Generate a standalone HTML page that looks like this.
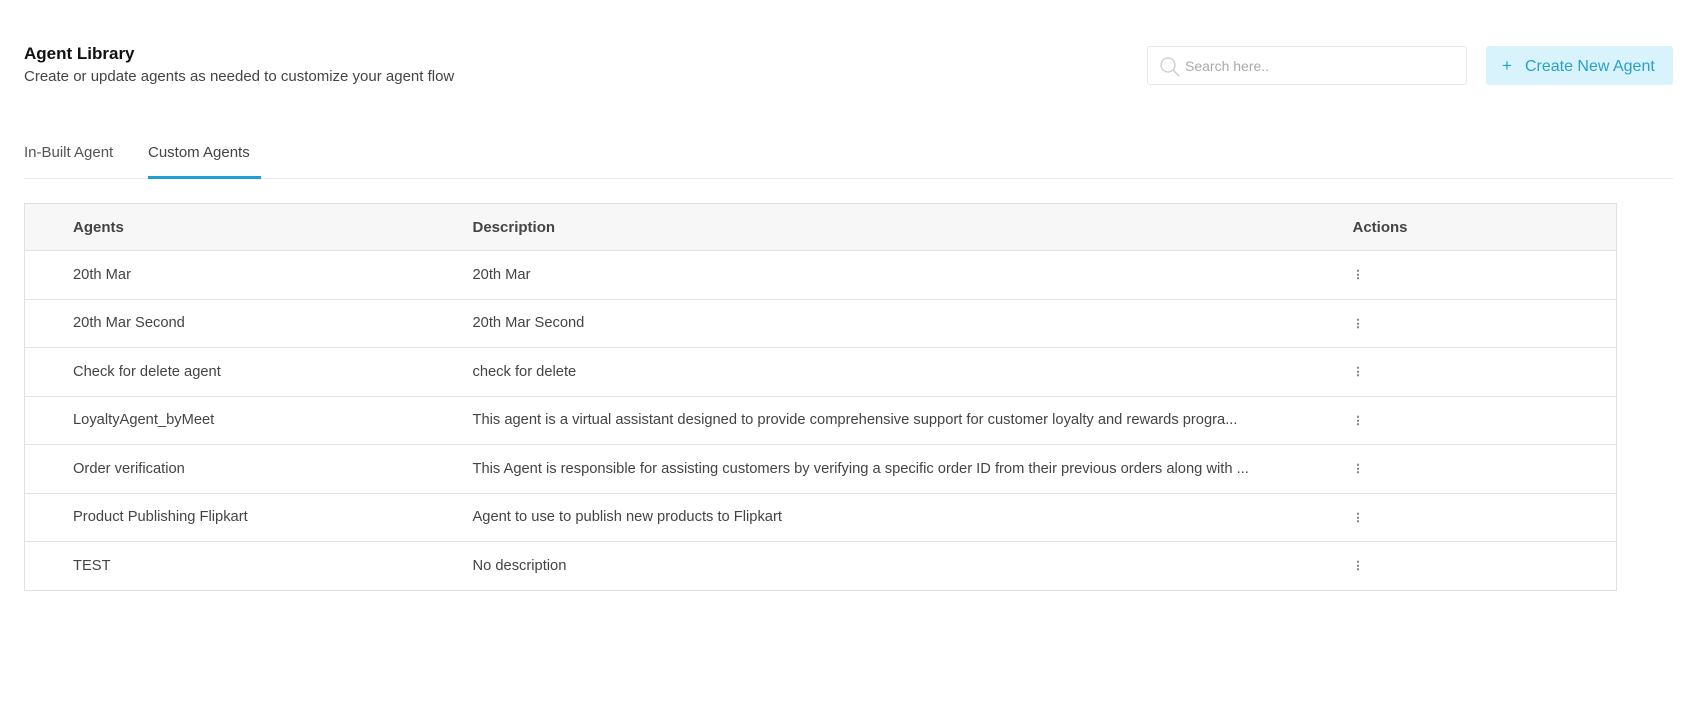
<!DOCTYPE html>
<html><head><meta charset="utf-8"><style>
*{box-sizing:border-box;margin:0;padding:0}
body{width:1685px;height:711px;background:#fff;font-family:"Liberation Sans",sans-serif;color:#333;position:relative;overflow:hidden}
.abs{position:absolute}
h1{position:absolute;left:24px;top:44px;font-size:17px;font-weight:bold;color:#111}
.sub{left:24px;top:68px;font-size:15px;color:#444}
.search{left:1147px;top:46px;width:320px;height:39px;border:1px solid #e6e6e6;border-radius:3px}
.search span{position:absolute;left:37px;top:11px;font-size:14px;color:#aaa}
.btn{left:1486px;top:46px;width:187px;height:39px;background:#d8f3fc;border-radius:3px;color:#2a9fcf;font-size:16px;line-height:39px;padding-left:16px}
.tab{top:144px;font-size:15px;color:#555}
.tabline{left:24px;top:178px;width:1649px;height:1px;background:#e8e8e8}
.ul{left:148px;top:176px;width:113px;height:3px;background:#1ea0d6}
table{position:absolute;left:24px;top:203px;width:1593px;border-collapse:collapse;border:1px solid #e0e0e0;font-size:14.7px}
th{background:#f7f7f7;height:47px;text-align:left;font-weight:bold;color:#444;font-size:15px;border-bottom:1px solid #e0e0e0}
td{height:48.5px;border-bottom:1px solid #e3e3e3;color:#444}
.c1{padding-left:48px;width:448px}
.c2{width:880px}
.dots{padding-left:0;font-weight:bold;font-size:11px;color:#666}
</style></head><body>
<h1>Agent Library</h1>
<div class="abs sub">Create or update agents as needed to customize your agent flow</div>
<div class="abs search"><svg class="abs" style="left:11px;top:9px" width="22" height="22" viewBox="0 0 22 22"><circle cx="9" cy="9" r="7" fill="none" stroke="#ccc" stroke-width="1.3"/><path d="M14 14l6 6" stroke="#ccc" stroke-width="1.5"/></svg><span>Search here..</span></div>
<div class="abs btn"><span style="font-size:17px;margin-right:13px">+</span>Create New Agent</div>
<div class="abs tab" style="left:24px">In-Built Agent</div>
<div class="abs tab" style="left:148px;color:#444">Custom Agents</div>
<div class="abs tabline"></div><div class="abs ul"></div>
<table>
<tr><th class="c1">Agents</th><th class="c2">Description</th><th>Actions</th></tr>
<tr><td class="c1">20th Mar</td><td>20th Mar</td><td class="dots">⋮</td></tr>
<tr><td class="c1">20th Mar Second</td><td>20th Mar Second</td><td class="dots">⋮</td></tr>
<tr><td class="c1">Check for delete agent</td><td>check for delete</td><td class="dots">⋮</td></tr>
<tr><td class="c1">LoyaltyAgent_byMeet</td><td>This agent is a virtual assistant designed to provide comprehensive support for customer loyalty and rewards progra...</td><td class="dots">⋮</td></tr>
<tr><td class="c1">Order verification</td><td>This Agent is responsible for assisting customers by verifying a specific order ID from their previous orders along with ...</td><td class="dots">⋮</td></tr>
<tr><td class="c1">Product Publishing Flipkart</td><td>Agent to use to publish new products to Flipkart</td><td class="dots">⋮</td></tr>
<tr><td class="c1">TEST</td><td>No description</td><td class="dots">⋮</td></tr>
</table>
</body></html>
